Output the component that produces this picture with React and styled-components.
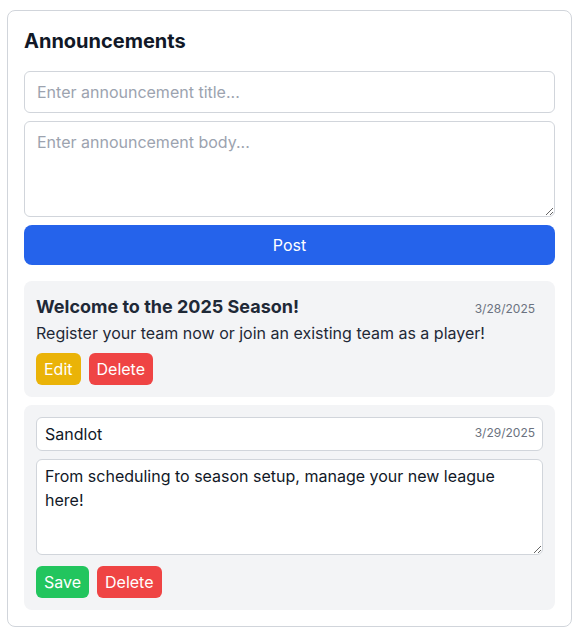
import React, { useState } from "react";
import styled, { createGlobalStyle } from "styled-components";

const Global = createGlobalStyle`
  body {
    margin: 0;
    font-family: Inter, "Noto Sans", sans-serif;
    color: #111827;
    background: #ffffff;
  }
  * { box-sizing: border-box; }
`;

const Panel = styled.div`
  margin: 10px 10px 0 7px;
  width: 565px;
  border: 1px solid #d1d5db;
  border-radius: 8px;
  padding: 16px;
  background: #fff;
`;

const Heading = styled.h2`
  margin: 0 0 16px;
  font-size: 20px;
  line-height: 28px;
  font-weight: 700;
  color: #111827;
`;

const Form = styled.div`
  display: flex;
  flex-direction: column;
  gap: 8px;
  margin-bottom: 16px;
`;

const Field = styled.input`
  width: 100%;
  font: inherit;
  font-size: 16px;
  line-height: 24px;
  padding: ${(p) => (p.$compact ? "4px 8px" : "8px 12px")};
  border: 1px solid #d1d5db;
  border-radius: 6px;
  background: #fff;
  color: #111827;
  outline: none;
  &::placeholder { color: #9ca3af; }
`;

const Area = styled.textarea`
  display: block;
  width: 100%;
  height: 96px;
  font: inherit;
  font-size: 16px;
  line-height: 24px;
  padding: ${(p) => (p.$compact ? "4px 8px" : "8px 12px")};
  border: 1px solid #d1d5db;
  border-radius: 6px;
  background: #fff;
  color: #111827;
  outline: none;
  &::placeholder { color: #9ca3af; }
`;

const PostButton = styled.button`
  height: 40px;
  border: none;
  border-radius: 8px;
  background: #2563eb;
  color: #fff;
  font: inherit;
  font-size: 16px;
  cursor: pointer;
`;

const List = styled.div`
  display: flex;
  flex-direction: column;
  gap: 8px;
`;

const Card = styled.div`
  background: #f3f4f6;
  border-radius: 8px;
  padding: 12px;
  display: flex;
  flex-direction: column;
  gap: ${(p) => (p.$editing ? "8px" : "0")};
`;

const Header = styled.div`
  position: relative;
`;

const Title = styled.h3`
  margin: 0;
  font-size: 18px;
  line-height: 28px;
  font-weight: 700;
  color: #1f2937;
`;

const DateTag = styled.span`
  position: absolute;
  top: 8px;
  right: 8px;
  font-size: 12px;
  line-height: 16px;
  color: #6b7280;
`;

const Body = styled.p`
  margin: 0;
  font-size: 16px;
  line-height: 24px;
  color: #1f2937;
`;

const Actions = styled.div`
  display: flex;
  gap: 8px;
  margin-top: ${(p) => (p.$editing ? "3px" : "8px")};
`;

const colors = { edit: "#eab308", delete: "#ef4444", save: "#22c55e" };

const ActionButton = styled.button`
  height: 32px;
  padding: 4px 8px;
  border: none;
  border-radius: 6px;
  background: ${(p) => colors[p.$kind]};
  color: #fff;
  font: inherit;
  font-size: 16px;
  line-height: 24px;
  cursor: pointer;
`;

export default function App() {
  const [title, setTitle] = useState("Sandlot");
  const [body, setBody] = useState(
    "From scheduling to season setup, manage your new league here!"
  );

  return (
    <>
      <Global />
      <Panel>
        <Heading>Announcements</Heading>
        <Form>
          <Field placeholder="Enter announcement title..." />
          <Area placeholder="Enter announcement body..." />
          <PostButton>Post</PostButton>
        </Form>
        <List>
          <Card>
            <Header>
              <Title>Welcome to the 2025 Season!</Title>
              <DateTag>3/28/2025</DateTag>
            </Header>
            <Body>Register your team now or join an existing team as a player!</Body>
            <Actions>
              <ActionButton $kind="edit">Edit</ActionButton>
              <ActionButton $kind="delete">Delete</ActionButton>
            </Actions>
          </Card>
          <Card $editing>
            <Header>
              <Field $compact value={title} onChange={(e) => setTitle(e.target.value)} />
              <DateTag>3/29/2025</DateTag>
            </Header>
            <Area $compact value={body} onChange={(e) => setBody(e.target.value)} />
            <Actions $editing>
              <ActionButton $kind="save">Save</ActionButton>
              <ActionButton $kind="delete">Delete</ActionButton>
            </Actions>
          </Card>
        </List>
      </Panel>
    </>
  );
}
